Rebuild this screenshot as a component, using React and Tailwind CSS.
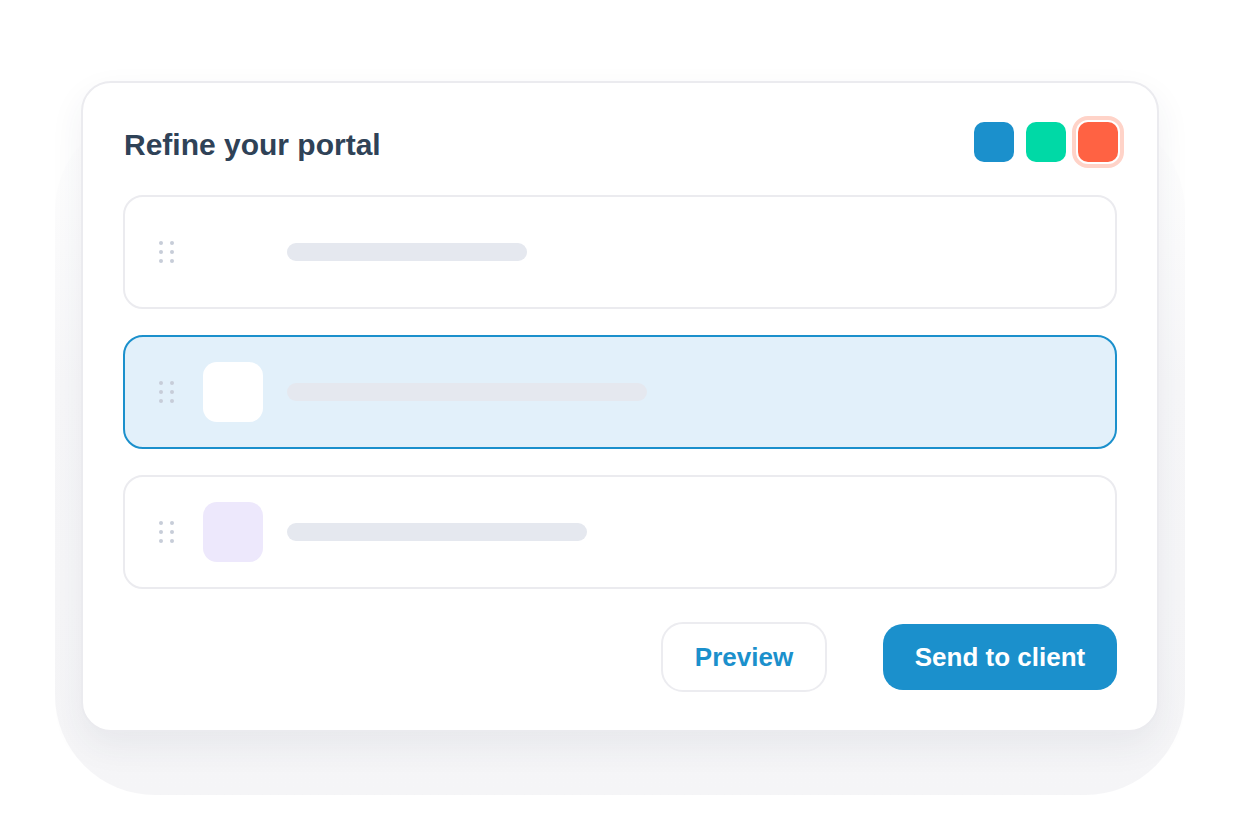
import React from 'react';

// ─── Drag handle (2 x 3 dots) ──────────────────────────────────────────────
const DragHandle = () => (
  <div className="grid grid-cols-2 gap-x-[9px] gap-y-[5px] w-[13px] shrink-0">
    {[0, 1, 2, 3, 4, 5].map((i) => (
      <span key={i} className="block h-[4px] w-[4px] rounded-full bg-[#c7cdd8]" />
    ))}
  </div>
);

// ─── Portal row ────────────────────────────────────────────────────────────
const PortalRow = ({ active, tile, barWidth }) => (
  <div
    className={`flex items-center h-[114px] rounded-[20px] border-2 pl-[34px] ${
      active ? 'bg-[#e2f0fa] border-[#1b90cc]' : 'bg-white border-[#ebebef]'
    }`}
  >
    <DragHandle />
    <div className={`ml-[31px] h-[60px] w-[60px] rounded-[14px] shrink-0 ${tile}`} />
    <div className="ml-[24px] h-[18px] rounded-full bg-[#e5e8ef]" style={{ width: barWidth }} />
  </div>
);

const rows = [
  { id: 1, tile: 'bg-transparent', barWidth: 240 },
  { id: 2, tile: 'bg-white', barWidth: 360, active: true },
  { id: 3, tile: 'bg-[#ede8fc]', barWidth: 300 },
];

export default function App() {
  return (
    <div className="min-h-[814px] w-full bg-white pt-[81px] pl-[81px] font-['Liberation_Sans',Arial,sans-serif]">
      <div className="relative w-[1078px]">
        {/* soft backdrop behind the card */}
        <div className="absolute -left-[26px] -right-[26px] top-[30px] -bottom-[63px] rounded-[100px] bg-linear-to-b from-white via-[#f7f7f9] via-40% to-[#f5f5f7]" />

        <div className="relative h-[651px] rounded-[30px] border-2 border-[#ebebef] bg-white px-[40px] pt-[39px] shadow-[0_14px_34px_rgba(40,50,80,0.07)]">
          {/* Header */}
          <div className="flex items-center justify-between h-[40px]">
            <h1 className="text-[30px] font-bold text-[#2f4257] ml-[1px] mt-[4px]">Refine your portal</h1>
            <div className="flex items-center gap-[12px] mr-[-1px]">
              <span className="h-[40px] w-[40px] rounded-[10px] bg-[#1b90cc]" />
              <span className="h-[40px] w-[40px] rounded-[10px] bg-[#00d9a6]" />
              <span className="h-[40px] w-[40px] rounded-[10px] bg-[#ff6243] ring-2 ring-white outline-4 outline-offset-2 outline-[#ffd3c8]" />
            </div>
          </div>

          {/* Rows */}
          <div className="mt-[33px] flex flex-col gap-[26px]">
            {rows.map((r) => (
              <PortalRow key={r.id} active={r.active} tile={r.tile} barWidth={r.barWidth} />
            ))}
          </div>

          {/* Actions */}
          <div className="mt-[33px] flex items-center justify-end gap-[56px]">
            <button className="h-[70px] w-[166px] rounded-[22px] border-2 border-[#ececf0] bg-white text-[26px] font-bold text-[#1b90cc]">
              Preview
            </button>
            <button className="h-[66px] w-[234px] rounded-[20px] bg-[#1b90cc] text-[26px] font-bold text-white">
              Send to client
            </button>
          </div>
        </div>
      </div>
    </div>
  );
}
